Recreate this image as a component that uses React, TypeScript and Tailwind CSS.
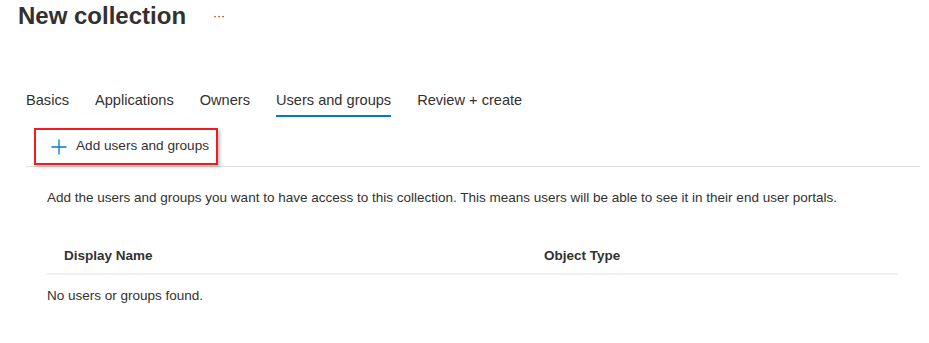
const TABS = ['Basics', 'Applications', 'Owners', 'Users and groups', 'Review + create'];
const ACTIVE = 'Users and groups';

export default function App() {
  return (
    <div className="w-[929px] h-[343px] bg-white text-[#323130] font-['Segoe_UI','Liberation_Sans',sans-serif] overflow-hidden">
      <div className="pl-[18px] flex items-center h-[31px]">
        <h1 className="text-[24px] leading-[31px] font-semibold">New collection</h1>
        <span className="ml-[27px] text-[12px] leading-none">···</span>
      </div>

      <div className="mt-[59px] ml-[26px] flex gap-[26px] text-[14.6px]">
        {TABS.map((t) => (
          <div key={t} className="flex flex-col">
            <span className="leading-[20px]">{t}</span>
            <span className={`mt-[5px] h-[2px] ${t === ACTIVE ? 'bg-[#0078d4]' : 'bg-transparent'}`} />
          </div>
        ))}
      </div>

      <div className="ml-[26px] w-[894px] border-b border-[#e1dfdd] pt-[11px] pl-[8px] pb-[1px]">
        <button className="flex items-center h-[37px] w-[184px] border-2 border-[#ee1c25] shadow-[2px_2px_3px_rgba(0,0,0,0.25)] pl-[15px] text-[13.6px]">
          <svg width="16" height="16" viewBox="0 0 16 16" className="shrink-0">
            <path d="M8 0.5V15.5M0.5 8H15.5" stroke="#0078d4" strokeWidth="1.3" fill="none" />
          </svg>
          <span className="ml-[9px]">Add users and groups</span>
        </button>
      </div>

      <div className="ml-[47px] mt-[21px] text-[13.5px] leading-[20px]">
        Add the users and groups you want to have access to this collection. This means users will be able to see it in their end user portals.
      </div>

      <div className="ml-[47px] mt-[31px] w-[851px] text-[13.5px]">
        <div className="flex h-[36px] items-center border-b-2 border-[#f0f0f0] font-semibold">
          <div className="w-[497px] pl-[17px]">Display Name</div>
          <div>Object Type</div>
        </div>
        <div className="mt-[11px] leading-[20px]">No users or groups found.</div>
      </div>
    </div>
  );
}
